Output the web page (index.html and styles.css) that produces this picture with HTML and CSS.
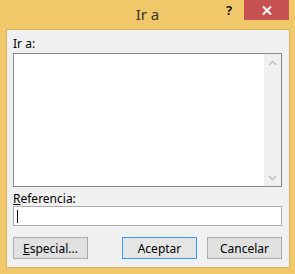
FILE: index.html
```html
<!DOCTYPE html>
<html lang="es">
<head>
    <meta charset="UTF-8">
    <title>Ir a</title>
    <link rel="stylesheet" href="styles.css">
</head>
<body>
    <div class="window">
        <div class="titlebar">
            <span class="title">Ir a</span>
            <span class="help">?</span>
            <span class="close">
                <svg width="10" height="9" viewBox="0 0 10 9">
                    <path d="M1 0.5 L9 8.5 M9 0.5 L1 8.5" stroke="#fff" stroke-width="2"/>
                </svg>
            </span>
        </div>
        <div class="client">
            <div class="label">Ir a:</div>
            <div class="list">
                <div class="list-body"></div>
                <div class="scroll">
                    <svg width="9" height="6" viewBox="0 0 9 6"><path d="M1 5 L4.5 1.5 L8 5" stroke="#c2c2c2" stroke-width="1.6" fill="none"/></svg>
                    <svg width="9" height="6" viewBox="0 0 9 6"><path d="M1 1 L4.5 4.5 L8 1" stroke="#c2c2c2" stroke-width="1.6" fill="none"/></svg>
                </div>
            </div>
            <div class="label label-ref"><u>R</u>eferencia:</div>
            <div class="input"><span class="caret"></span></div>
            <div class="buttons">
                <button class="btn"><u>E</u>special...</button>
                <div class="spacer"></div>
                <button class="btn default">Aceptar</button>
                <button class="btn">Cancelar</button>
            </div>
        </div>
    </div>
</body>
</html>
```
FILE: styles.css
```css
body {
    margin: 0;
    background: #f0c86a;
    font-family: "Noto Sans", "Open Sans", sans-serif;
    font-size: 12px;
    color: #000;
}

.window {
    width: 295px;
    height: 274px;
    display: flex;
    flex-direction: column;
}

.titlebar {
    height: 29px;
    position: relative;
}

.title {
    position: absolute;
    left: 0;
    right: 0;
    top: 4px;
    text-align: center;
    font-size: 15px;
    line-height: 20px;
    color: #3a3428;
}

.help {
    position: absolute;
    left: 226px;
    top: 1px;
    font-weight: bold;
    font-size: 13px;
    line-height: 18px;
    color: #222;
}

.close {
    position: absolute;
    left: 244px;
    top: 0;
    width: 45px;
    height: 20px;
    background: #c75050;
    display: flex;
    align-items: center;
    justify-content: center;
}

.client {
    margin: 0 5px 6px 6px;
    border: 1px solid #d6b261;
    background: #f0f0f0;
    padding: 0 7px 8px 6px;
    display: flex;
    flex-direction: column;
}

.label {
    line-height: 15px;
    margin-top: 6px;
    margin-bottom: 2px;
}

.label-ref {
    margin-top: 4px;
    margin-bottom: 0;
}

.list {
    height: 132px;
    border: 1px solid #828790;
    background: #fff;
    display: flex;
}

.list-body {
    flex: 1;
}

.scroll {
    width: 17px;
    background: #f0f0f0;
    display: flex;
    flex-direction: column;
    justify-content: space-between;
    align-items: center;
    padding: 6px 0 5px;
}

.input {
    height: 18px;
    border: 1px solid #abadb3;
    background: #fff;
    display: flex;
    align-items: center;
    padding-left: 3px;
}

.caret {
    width: 1px;
    height: 13px;
    background: #000;
}

.buttons {
    display: flex;
    margin-top: 11px;
}

.spacer {
    flex: 1;
}

.btn {
    width: 75px;
    height: 22px;
    border: 1px solid #adadad;
    background: #e1e1e1;
    font-family: inherit;
    font-size: 12px;
    color: #000;
    padding: 0;
    margin: 0;
}

.btn + .btn {
    margin-left: 10px;
}

.default {
    border-color: #3399ff;
    background: #e5e5e5;
}
```
